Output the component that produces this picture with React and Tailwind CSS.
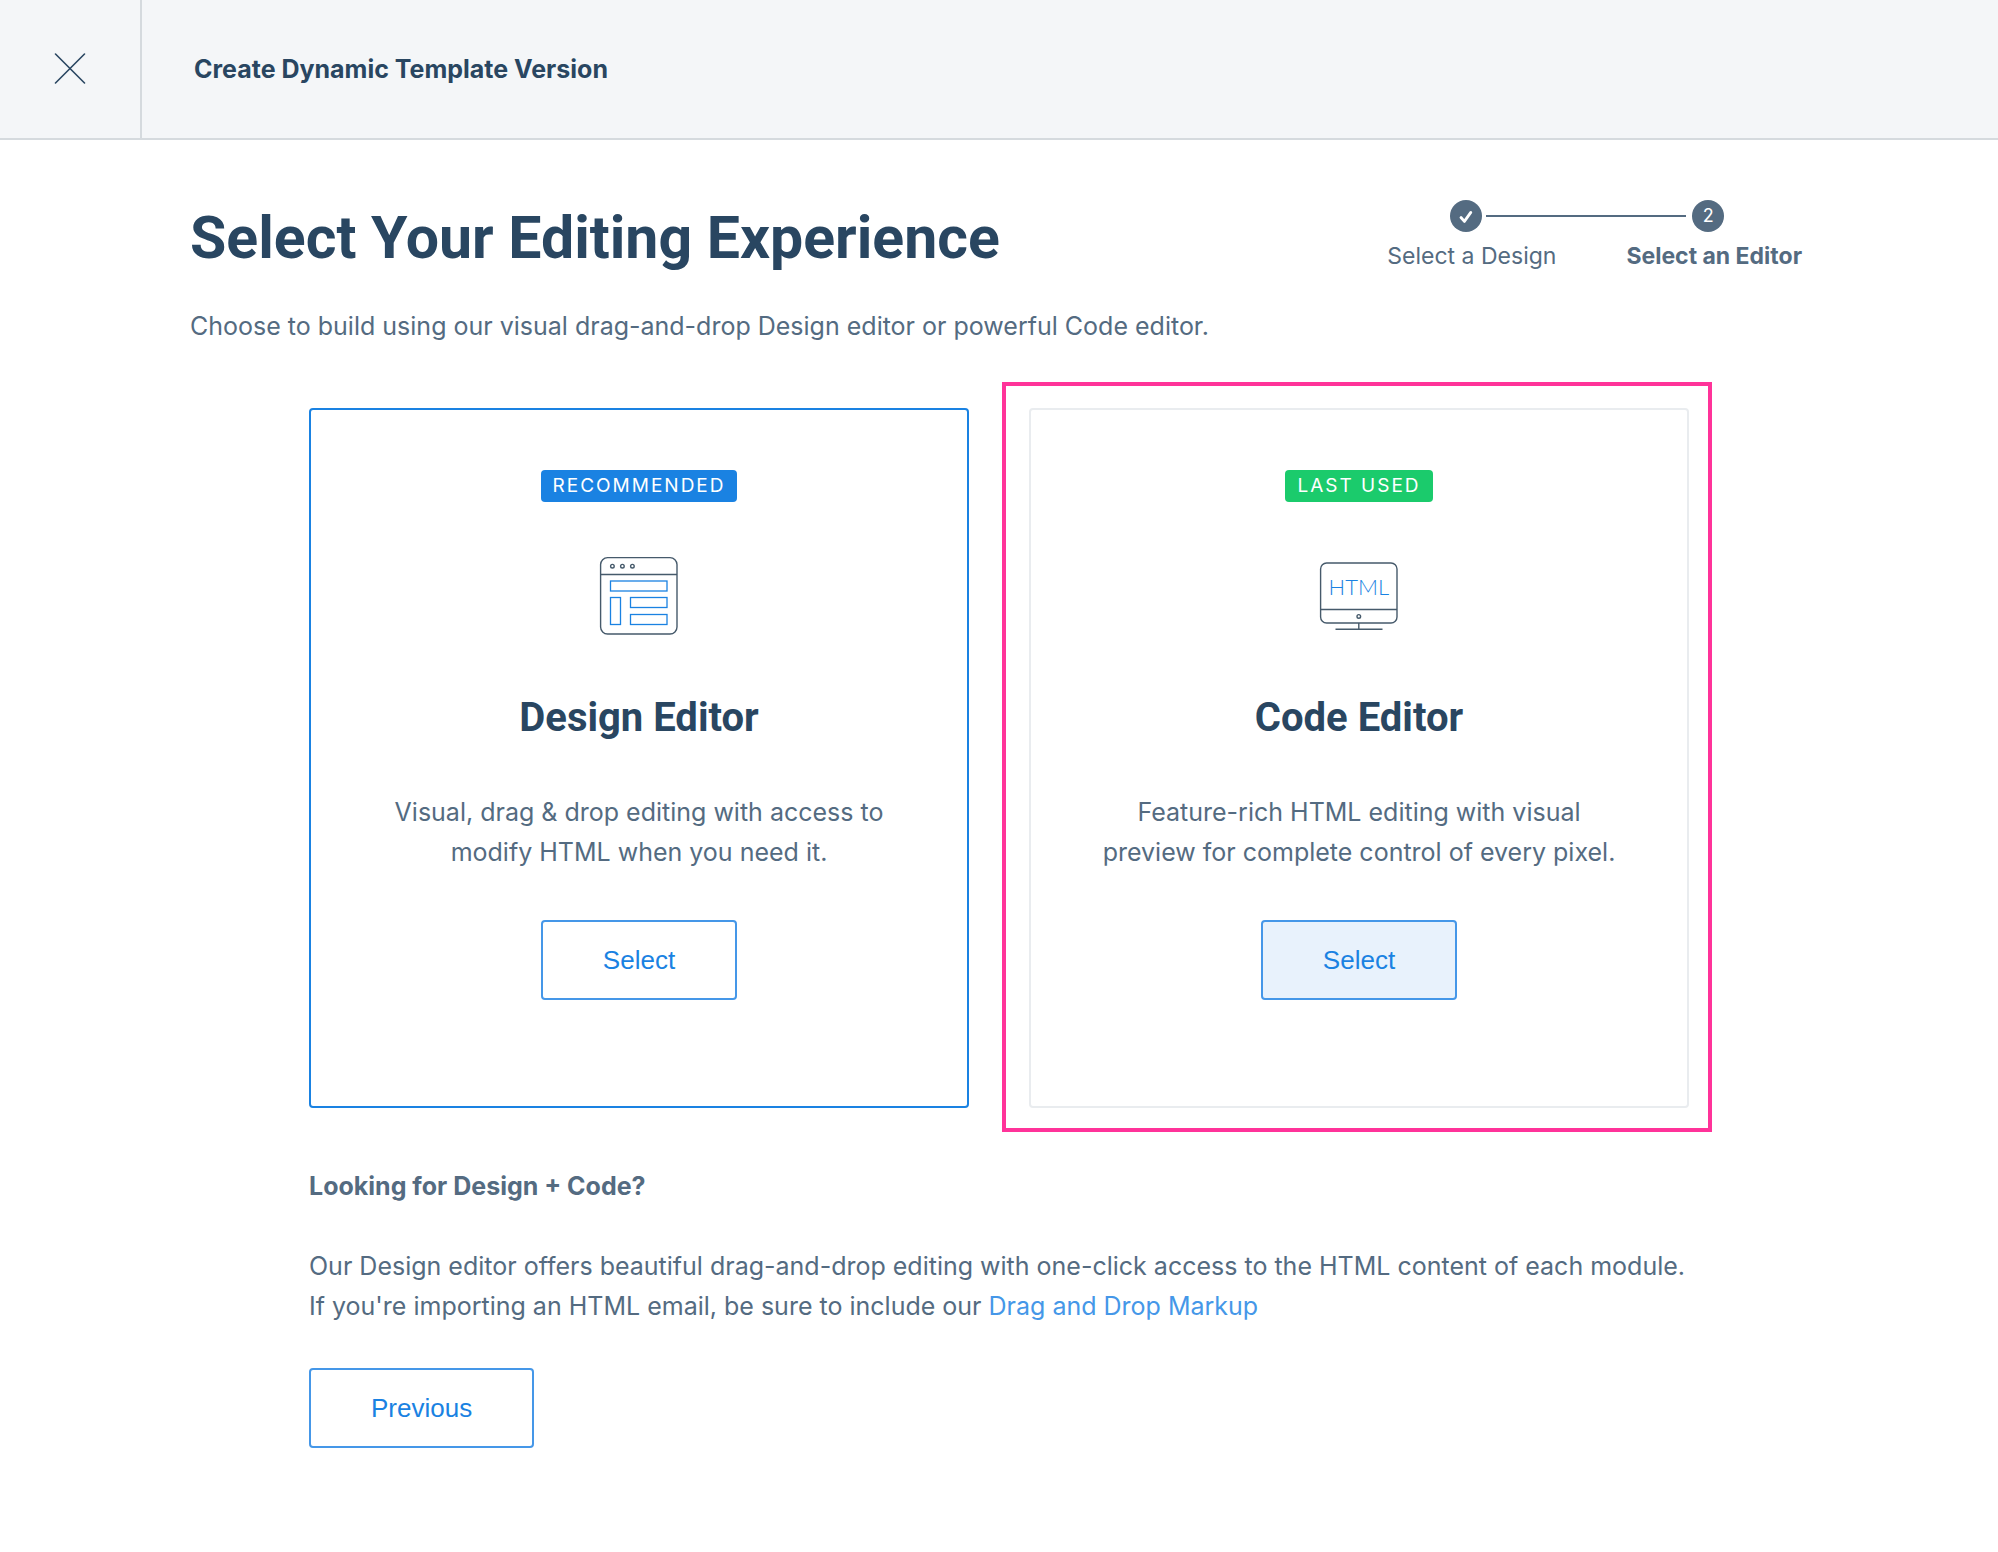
import React from "react";

function CloseIcon() {
  return (
    <svg width="32" height="32" viewBox="0 0 32 32" fill="none" stroke="#294661" strokeWidth="1.6" strokeLinecap="round" aria-hidden="true">
      <path d="M1.5 1 30.5 30M30.5 1 1.5 30" />
    </svg>
  );
}

function CheckIcon() {
  return (
    <svg width="16" height="16" viewBox="0 0 16 16" fill="none" stroke="#fff" strokeWidth="2.8" strokeLinecap="round" strokeLinejoin="round" aria-hidden="true">
      <path d="M3 9.5 6.4 13.4 12.8 4.4" />
    </svg>
  );
}

function DesignIcon() {
  return (
    <svg width="80" height="80" viewBox="0 0 80 80" fill="none" aria-hidden="true">
      <g stroke="#465a6b" strokeWidth="1.4">
        <rect x="1.6" y="1.6" width="76.4" height="76.4" rx="7" />
        <path d="M1.6 18.5H78" />
        <circle cx="13.4" cy="10.2" r="1.8" />
        <circle cx="23.4" cy="10.2" r="1.8" />
        <circle cx="33.4" cy="10.2" r="1.8" />
      </g>
      <g stroke="#1a82e2" strokeWidth="1.3">
        <rect x="11.5" y="25" width="56.5" height="10" />
        <rect x="11.5" y="41.5" width="10" height="27" />
        <rect x="31.5" y="41.5" width="36.5" height="10" />
        <rect x="31.5" y="58.5" width="36.5" height="10" />
      </g>
    </svg>
  );
}

function CodeIcon() {
  return (
    <svg width="80" height="80" viewBox="0 0 80 80" fill="none" aria-hidden="true">
      <g stroke="#465a6b" strokeWidth="1.4">
        <rect x="1.6" y="7" width="76.4" height="60" rx="6" />
        <path d="M1.6 53.5H78M39.8 67V73M16.5 73.3H63.5" />
        <circle cx="39.8" cy="60.4" r="1.8" />
      </g>
      <text x="39.8" y="39" textAnchor="middle" fill="#1a82e2" className="font-['Lato'] text-[22px] font-light">HTML</text>
    </svg>
  );
}

function OutlineButton({ children, filled }) {
  const tone = filled ? "bg-[#e8f2fc]" : "bg-white";
  return (
    <button
      type="button"
      className={`h-20 rounded-[4px] border-2 border-[#4597e8] px-15 font-['Liberation_Sans',Arial,sans-serif] text-[26px] leading-10 text-[#1a82e2] ${tone}`}
    >
      {children}
    </button>
  );
}

function EditorCard({ badge, badgeClass, borderClass, icon, title, text, filled, highlighted }) {
  return (
    <article className={`relative flex min-h-[700px] flex-1 flex-col items-center rounded-[4px] border-2 px-15 py-15 text-center ${borderClass}`}>
      {highlighted && (
        <div className="pointer-events-none absolute -top-[28px] -right-[25px] -bottom-[26px] -left-[29px] border-4 border-[#ff3399]" />
      )}
      <span className={`rounded-[4px] px-3 text-[19px] leading-8 tracking-[2px] text-white uppercase ${badgeClass}`}>{badge}</span>
      <div className="mt-[54px]">{icon}</div>
      <h2 className="mt-13 font-['Roboto',sans-serif] text-[40px] leading-[60px] font-bold text-[#294661]">{title}</h2>
      <p className="mt-11 max-w-[520px]">{text}</p>
      <div className="mt-12 flex">
        <OutlineButton filled={filled}>Select</OutlineButton>
      </div>
    </article>
  );
}

function StepDot({ children }) {
  return (
    <span className="flex size-8 shrink-0 items-center justify-center rounded-full bg-[#546b81] text-[18px] leading-none text-white">
      {children}
    </span>
  );
}

export default function App() {
  return (
    <div className="min-h-screen bg-white font-['Inter',sans-serif] text-[25px] leading-10 text-[#546b81]">
      <header className="flex h-[140px] border-b-2 border-[#d5dade] bg-[#f4f6f8]">
        <button type="button" aria-label="Close" className="flex w-[142px] items-center justify-center border-r-2 border-[#d5dade]">
          <CloseIcon />
        </button>
        <div className="flex items-center px-13 font-bold text-[#294661]">Create Dynamic Template Version</div>
      </header>

      <main className="px-[190px] pt-15 pb-15">
        <div className="flex items-start justify-between">
          <h1 className="font-['Roboto',sans-serif] text-[59px] leading-[76px] font-bold text-[#294661]">Select Your Editing Experience</h1>
          <div className="flex flex-col pr-1.5">
            <div className="flex items-center pl-[63px]">
              <StepDot>
                <CheckIcon />
              </StepDot>
              <span className="mr-1.5 ml-1 h-0.5 w-[200px] bg-[#546b81]" />
              <StepDot>2</StepDot>
            </div>
            <ol className="mt-1 flex justify-between gap-[70px] text-[23px]">
              <li>Select a Design</li>
              <li className="font-bold" aria-current="step">Select an Editor</li>
            </ol>
          </div>
        </div>
        <p className="mt-[30px]">Choose to build using our visual drag-and-drop Design editor or powerful Code editor.</p>

        <div className="mx-auto mt-[62px] max-w-[1380px]">
          <div className="flex gap-15">
            <EditorCard
              badge="Recommended"
              badgeClass="bg-[#1a82e2]"
              borderClass="border-[#1a82e2]"
              icon={<DesignIcon />}
              title="Design Editor"
              text="Visual, drag & drop editing with access to modify HTML when you need it."
            />
            <EditorCard
              badge="Last used"
              badgeClass="bg-[#1bcb6c]"
              borderClass="border-[#e9ecef]"
              icon={<CodeIcon />}
              title="Code Editor"
              text="Feature-rich HTML editing with visual preview for complete control of every pixel."
              filled
              highlighted
            />
          </div>

          <h3 className="mt-[58px] font-bold">Looking for Design + Code?</h3>
          <p className="mt-10 -mr-5">
            Our Design editor offers beautiful drag-and-drop editing with one-click access to the HTML content of each module.
            <br />
            If you're importing an HTML email, be sure to include our{" "}
            <a href="#markup" className="text-[#4597e8]">Drag and Drop Markup</a>
          </p>
          <div className="mt-[42px] flex">
            <OutlineButton>Previous</OutlineButton>
          </div>
        </div>
      </main>
    </div>
  );
}
